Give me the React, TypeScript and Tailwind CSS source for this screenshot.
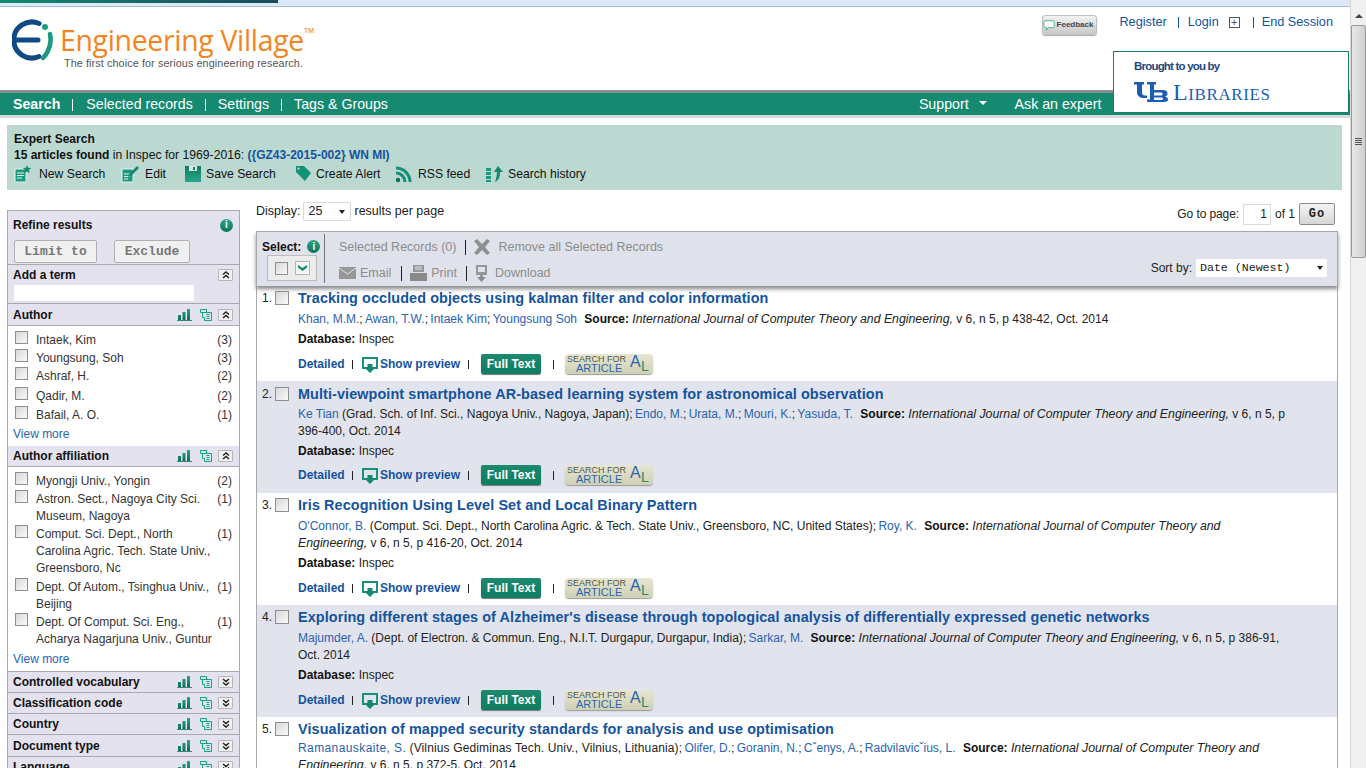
import React from "react";

const GREEN = "#138a70";

const Check = ({ className = "" }: { className?: string }) => (
  <span className={`block w-[13px] h-[13px] shrink-0 border border-[#8f8f8f] bg-gradient-to-br from-[#d8d8d8] to-[#fafafa] ${className}`} />
);

const Info = ({ className = "" }: { className?: string }) => (
  <span className={`flex items-center justify-center w-[13px] h-[13px] rounded-full bg-gradient-to-b from-[#2aa888] to-[#0c7259] text-white text-[10px] font-bold leading-none ${className}`}>
    i
  </span>
);

const Bars = () => (
  <svg width="15" height="12" viewBox="0 0 15 12">
    <defs>
      <linearGradient id="barg" x1="0" y1="0" x2="0" y2="1">
        <stop offset="0" stopColor="#25a486" />
        <stop offset="1" stopColor="#0b6f58" />
      </linearGradient>
    </defs>
    <path d="M1 6h3v5H1zM5.500 3h3v8h-3zM10 0h3v11h-3z" fill="url(#barg)" />
    <path d="M0 11.200h15V12H0z" fill="#0b6f58" />
  </svg>
);

const Tree = () => (
  <svg width="12" height="12" viewBox="0 0 12 12" fill="none" stroke="#12a585" strokeWidth="1">
    <path d="M.5.500h6v3h-6zM2.500 3.500h9v8h-7v-3h-2zM6.500 5.500h3M6.500 7.500h3M6.500 9.500h3" />
  </svg>
);

const Toggle = ({ open }: { open: boolean }) => (
  <span className="flex items-center justify-center w-[15px] h-[12px] border border-[#b5b5b5] rounded-[1px] bg-[#f1f1f1]">
    <svg width="8" height="8" viewBox="0 0 8 8" fill="none" stroke="#222" strokeWidth="1.500">
      {open ? <path d="M1 3.500 4 1l3 2.500M1 7 4 4.500 7 7" /> : <path d="M1 1l3 2.500L7 1M1 4.500 4 7l3-2.500" />}
    </svg>
  </span>
);

const FacetHead = ({ label, open, h = "h-[21px]" }: { label: string; open: boolean; h?: string }) => (
  <div className={`flex items-center ${h} pl-[5px] pr-[6px] bg-[#e5e2ef] border-b border-[#a9a9a9] font-bold text-[#111]`}>
    <span className="flex-1">{label}</span>
    <span className="mr-[8px] flex"><Bars /></span>
    <span className="mr-[6px] flex"><Tree /></span>
    <Toggle open={open} />
  </div>
);

const FacetItem = ({ label, n, h }: { label: React.ReactNode; n: number; h: string }) => (
  <div className={`flex items-start pl-[7px] pr-[7px] leading-[17px] text-[#333] ${h}`}>
    <Check className="mt-[0px]" />
    <span className="ml-[8px] flex-1 pt-[1px] whitespace-nowrap">{label}</span>
    <span className="pt-[1px]">({n})</span>
  </div>
);

const ViewMore = () => (
  <div className="pl-[5px] h-[17px] leading-[17px] text-[#2a62b0]">View more</div>
);

const Sidebar = () => (
  <div className="w-[233px] shrink-0 border border-b-0 border-[#a9a9a9] bg-white h-[600px] overflow-hidden text-[12px]">
    <div className="bg-[#e5e2ef] border-b border-[#a9a9a9] h-[54px] px-[5px]">
      <div className="flex items-center justify-between h-[26px] pt-[2px] pr-[1px]">
        <span className="font-bold text-[#111]">Refine results</span>
        <Info />
      </div>
      <div className="flex gap-[17px] pl-[1px] mt-[3px]">
        <span className="flex items-center justify-center w-[83px] h-[23px] rounded-[2px] border border-[#b0b0b0] bg-[#f0f0f0] text-[#777] font-bold text-[13px] pt-[1px] font-['Liberation_Mono',monospace]">Limit to</span>
        <span className="flex items-center justify-center w-[76px] h-[23px] rounded-[2px] border border-[#b0b0b0] bg-[#f0f0f0] text-[#777] font-bold text-[13px] pt-[1px] font-['Liberation_Mono',monospace]">Exclude</span>
      </div>
    </div>
    <div className="bg-[#e5e2ef] border-b border-[#a9a9a9] h-[39px] pl-[5px] pr-[6px]">
      <div className="flex items-center justify-between h-[20px] font-bold text-[#111]">
        <span>Add a term</span>
        <Toggle open />
      </div>
      <div className="w-[180px] h-[16px] bg-white rounded-[1px] ml-[1px]" />
    </div>
    <FacetHead label="Author" open h="h-[22px]" />
    <div className="pt-[5px] h-[120px]">
      <FacetItem label="Intaek, Kim" n={3} h="h-[18px]" />
      <FacetItem label="Youngsung, Soh" n={3} h="h-[18px]" />
      <FacetItem label="Ashraf, H." n={2} h="h-[20px]" />
      <FacetItem label="Qadir, M." n={2} h="h-[19px]" />
      <FacetItem label="Bafail, A. O." n={1} h="h-[20px]" />
      <ViewMore />
    </div>
    <FacetHead label="Author affiliation" open />
    <div className="pt-[5px] h-[204px] border-t-0">
      <FacetItem label="Myongji Univ., Yongin" n={2} h="h-[18px]" />
      <FacetItem label={<>Astron. Sect., Nagoya City Sci.<br />Museum, Nagoya</>} n={1} h="h-[35px]" />
      <FacetItem label={<>Comput. Sci. Dept., North<br />Carolina Agric. Tech. State Univ.,<br />Greensboro, Nc</>} n={1} h="h-[53px]" />
      <FacetItem label={<>Dept. Of Autom., Tsinghua Univ.,<br />Beijing</>} n={1} h="h-[35px]" />
      <FacetItem label={<>Dept. Of Comput. Sci. Eng.,<br />Acharya Nagarjuna Univ., Guntur</>} n={1} h="h-[38px]" />
      <ViewMore />
    </div>
    <div className="border-t border-[#a9a9a9]">
      <FacetHead label="Controlled vocabulary" open={false} />
      <FacetHead label="Classification code" open={false} />
      <FacetHead label="Country" open={false} />
      <FacetHead label="Document type" open={false} h="h-[22px]" />
      <FacetHead label="Language" open={false} />
    </div>
  </div>
);

const Sep = ({ className = "" }: { className?: string }) => (
  <span className={`inline-block w-px h-[11px] shrink-0 bg-[#222] ${className}`} />
);

const SearchForArticle = () => (
  <span className="relative block w-[88px] h-[20px] rounded-[4px] bg-gradient-to-b from-[#e6e6d3] to-[#cfd0b4] shadow-[0_1px_1px_#999] overflow-hidden font-normal">
    <span className="absolute left-[2px] top-[1px] text-[9px] leading-[9px] text-[#4f5a4f] whitespace-nowrap">SEARCH FOR</span>
    <span className="absolute left-[11px] top-[9px] text-[11px] leading-[11px] text-[#2c64ad] whitespace-nowrap">ARTICLE</span>
    <span className="absolute left-[65px] top-[0px] text-[16px] leading-[16px] text-[#2c64ad]">A</span>
    <span className="absolute left-[76px] top-[5px] text-[14px] leading-[15px] text-[#2f8a57]">L</span>
  </span>
);

const Actions = () => (
  <div className="flex items-center h-[26px] text-[#14539f] font-bold whitespace-nowrap">
    <span className="w-[46px]">Detailed</span>
    <Sep className="ml-[8px] mr-[9px] !h-[9px]" />
    <svg width="16" height="16" viewBox="0 0 16 16" className="mr-[2px] mt-[2px] shrink-0">
      <path d="M4 11H1V1h14v10h-3" fill="none" stroke="#18917a" strokeWidth="2" />
      <path d="M5.500 7h5v3H14l-6 6-6-6h3.500z" fill="#138a70" />
    </svg>
    <span className="w-[80px]">Show preview</span>
    <Sep className="ml-[8px] mr-[12px] !h-[9px]" />
    <span className="flex items-center justify-center w-[60px] h-[20px] rounded-[2px] bg-gradient-to-b from-[#1c8a6f] to-[#0f7b61] text-white shadow-[0_1px_1px_#777] mb-[1px]">Full Text</span>
    <Sep className="ml-[12px] mr-[11px] !h-[9px]" />
    <SearchForArticle />
  </div>
);

type Result = {
  title: string;
  authors: React.ReactNode;
  grey?: boolean;
};

const A = ({ children }: { children: React.ReactNode }) => <span className="text-[#2a62b0]">{children}</span>;
const Semi = () => <span className="-mr-[1px]">; </span>;
const Src = ({ children }: { children?: React.ReactNode }) => (
  <span>
    <b className="ml-[4px] text-[#111]">Source: </b>
    <i className="text-[12.300px]">International Journal of Computer Theory and Engineering,</i>
    {children}
  </span>
);

const results: Result[] = [
  {
    title: "Tracking occluded objects using kalman filter and color information",
    authors: (
      <>
        <A>Khan, M.M.</A><Semi /><A>Awan, T.W.</A><Semi /><A>Intaek Kim</A><Semi /><A>Youngsung Soh</A> <Src> v 6, n 5, p 438-42, Oct. 2014</Src>
      </>
    ),
  },
  {
    title: "Multi-viewpoint smartphone AR-based learning system for astronomical observation",
    grey: true,
    authors: (
      <>
        <A>Ke Tian</A> (Grad. Sch. of Inf. Sci., Nagoya Univ., Nagoya, Japan)<Semi /><A>Endo, M.</A><Semi /><A>Urata, M.</A><Semi /><A>Mouri, K.</A><Semi /><A>Yasuda, T.</A> <Src> v 6, n 5, p 396-400, Oct. 2014</Src>
      </>
    ),
  },
  {
    title: "Iris Recognition Using Level Set and Local Binary Pattern",
    authors: (
      <>
        <A>O'Connor, B.</A> (Comput. Sci. Dept., North Carolina Agric. &amp; Tech. State Univ., Greensboro, NC, United States)<Semi /><A>Roy, K.</A> <Src> v 6, n 5, p 416-20, Oct. 2014</Src>
      </>
    ),
  },
  {
    title: "Exploring different stages of Alzheimer's disease through topological analysis of differentially expressed genetic networks",
    grey: true,
    authors: (
      <>
        <A>Majumder, A.</A> (Dept. of Electron. &amp; Commun. Eng., N.I.T. Durgapur, Durgapur, India)<Semi /><A>Sarkar, M.</A> <Src> v 6, n 5, p 386-91, Oct. 2014</Src>
      </>
    ),
  },
  {
    title: "Visualization of mapped security standards for analysis and use optimisation",
    authors: (
      <>
        <span className="tracking-[0.4px]"><A>Ramanauskaite, S.</A></span> <span className="tracking-[0.13px]">(Vilnius Gediminas Tech. Univ., Vilnius, Lithuania)</span><Semi /><A>Olifer, D.</A><Semi /><A>Goranin, N.</A><Semi /><A>Cˇenys, A.</A><Semi /><A>Radvilavicˇius, L.</A> <Src> v 6, n 5, p 372-5, Oct. 2014</Src>
      </>
    ),
  },
];

const ResultRow = ({ r, i }: { r: Result; i: number }) => (
  <div className={`flex pl-[5px] pr-[50px] ${i === 1 ? "pt-[4px] pb-[5px]" : "pt-[3px] pb-[4px]"} ${r.grey ? "bg-[#e1e4ec]" : "bg-white"}`}>
    <span className="w-[13px] text-[#222] leading-[18px]">{i + 1}.</span>
    <Check className="mt-[2px] !w-[14px] !h-[14px]" />
    <div className="ml-[9px] flex-1">
      <div className="h-[18px] leading-[18px] text-[14.400px] font-bold text-[#14539f] whitespace-nowrap tracking-[0.1px]">{r.title}</div>
      <div className={`leading-[17px] text-[#222] ${i === 1 ? "mt-[3px]" : i === 4 ? "mt-[2px]" : "mt-[4px]"}`}>{r.authors}</div>
      <div className="mt-[3px] leading-[17px] text-[#222]"><b className="text-[#111]">Database:</b> Inspec</div>
      <div className={i === 1 ? "mt-[2px]" : "mt-[3px]"}><Actions /></div>
    </div>
  </div>
);

const tb = "flex items-center text-[12.200px] text-[#111]";

const App = () => (
  <div className="relative h-[768px] overflow-hidden flex bg-white text-[12px] font-['Liberation_Sans',Arial,sans-serif]">
    <div className="w-[1350px] shrink-0">
      {/* browser strip */}
      <div className="h-[7px] bg-[#dce9f8] border-b border-[#a9bcd6]">
        <div className="w-[278px] h-[3px] bg-gradient-to-r from-[#128a6f] to-[#174b5a]" />
      </div>

      {/* header */}
      <div className="relative flex justify-between h-[83px]">
        <div className="flex pl-[12px] pt-[12px]">
          <svg width="48" height="46" viewBox="0 0 48 46" className="shrink-0">
            <path d="M27 4.500A18 18 0 1 0 27 37.500" fill="none" stroke="#0f4a85" strokeWidth="5" strokeLinecap="round" />
            <path d="M5 21h21" stroke="#0f4a85" strokeWidth="5" strokeLinecap="round" />
            <circle cx="33" cy="8" r="3" fill="#1c9a80" />
            <path d="M38 15c2 8-1 18-7 24" fill="none" stroke="#1c9a80" strokeWidth="4.500" strokeLinecap="round" />
          </svg>
          <div>
            <div className="flex items-start h-[38px] pt-[2px]">
              <span className="text-[28.400px] leading-[38px] tracking-[-0.3px] text-[#f5841f] font-['Open_Sans',sans-serif]">Engineering Village</span>
              <span className="text-[7px] text-[#f5a35a] font-bold mt-[5px]">TM</span>
            </div>
            <div className="pl-[4px] -mt-[1px] text-[10.800px] leading-[14px] text-[#555] tracking-[0.1px]">The first choice for serious engineering research.</div>
          </div>
        </div>
        <div className="flex items-start pr-[17px] pt-[7px] text-[#14539f] text-[12.700px]">
          <span className="flex items-center justify-end w-[55px] h-[20px] mt-[1px] rounded-[3px] border border-[#c0c0c0] bg-gradient-to-b from-[#f2f2f2] to-[#c9c9c9] mr-[22px] shadow-[0_1px_1px_#aaa] text-[8px] font-bold text-[#444] pr-[3px] gap-[1px]">
            <svg width="14" height="13" viewBox="0 0 14 13" fill="#fff" stroke="#3fa58d">
              <path d="M2 1h10a1 1 0 0 1 1 1v6a1 1 0 0 1-1 1H6l-2 3V9H2a1 1 0 0 1-1-1V2a1 1 0 0 1 1-1z" />
            </svg>
            Feedback
          </span>
          <span className="leading-[16px]">Register</span>
          <span className="w-px h-[11px] bg-[#14539f] ml-[11px] mr-[9px] mt-[3px]" />
          <span className="leading-[16px]">Login</span>
          <span className="flex items-center justify-center w-[11px] h-[11px] border border-[#555] text-[#555] ml-[10px] mr-[13px] mt-[3px] text-[11px] leading-none">+</span>
          <span className="w-px h-[11px] bg-[#14539f] mr-[8px] mt-[3px]" />
          <span className="leading-[16px]">End Session</span>
        </div>
      </div>

      {/* nav */}
      <div className="h-[3px] bg-[#8e8e8e]" />
      <div className="flex items-center h-[22px] pl-[13px] pt-[2px] bg-[#158a70] text-white text-[14.200px]">
        <b>Search</b>
        <span className="w-px h-[12px] bg-white ml-[12px] mr-[13px]" />
        <span>Selected records</span>
        <span className="w-px h-[12px] bg-white ml-[12px] mr-[12px]" />
        <span>Settings</span>
        <span className="w-px h-[12px] bg-white ml-[12px] mr-[12px]" />
        <span>Tags &amp; Groups</span>
        <span className="ml-[531px]">Support</span>
        <span className="ml-[10px] mb-[4px] w-0 h-0 border-x-[4px] border-x-transparent border-t-[4px] border-t-white" />
        <span className="ml-[28px]">Ask an expert</span>
      </div>
      <div className="h-[3px] bg-[#d9d9d9]" />

      {/* brought to you */}
      <div className="absolute left-[1113px] top-[51px] w-[236px] h-[62px] border border-[#15806a] bg-white pl-[20px] pt-[7px]">
        <div className="text-[11.500px] leading-[14px] font-bold tracking-[-0.8px] text-[#1d4a80]">Brought to you by</div>
        <div className="flex items-center mt-[7px] h-[24px]">
          <svg width="34" height="20" viewBox="0 0 34 20" fill="#1a5fb4" className="shrink-0" fillRule="evenodd">
            <path d="M0 0h10v2.500H8v8c0 2 1 3 3 3h2V16h-3c-4 0-7-2-7-5.500v-8H0z" />
            <path d="M13 0h9v2.500h-2V8h8c4 0 5.500 1.500 5.500 3.500 0 1.500-1 2.500-2.500 3 2 .5 3 1.500 3 3 0 1.500-1 2.500-4 2.500H13v-2.500h3v-15h-3zM20 10.500v3h7c1 0 1.500-.5 1.500-1.500s-.5-1.500-1.500-1.500zM20 15.500V18h7c1.500 0 2-.5 2-1.250s-.5-1.250-2-1.250z" />
          </svg>
          <span className="ml-[5px] text-[24px] leading-[24px] text-[#1a5fb4] font-['Liberation_Serif',serif] [font-variant:small-caps] tracking-[0.6px]">Libraries</span>
        </div>
      </div>

      {/* search summary */}
      <div className="mt-[7px] ml-[7px] w-[1335px] h-[65px] bg-[#bbd9d0] pl-[7px] pt-[6px] text-[#111]">
        <div className="font-bold leading-[16px]">Expert Search</div>
        <div className="leading-[17px]">
          <b>15 articles found</b> <span className="text-[12.200px]">in Inspec for 1969-2016:</span> <b className="text-[#14539f]">({"{"}GZ43-2015-002{"}"} WN MI)</b>
        </div>
        <div className="flex items-center h-[20px]">
          <span className={`${tb} w-[107px]`}>
            <svg width="18" height="18" viewBox="0 0 18 18" className="mr-[7px]">
              <path d="M1 4h11v13H1z" fill="#1b9a7e" stroke="#e4f2ee" />
              <path d="M3 8h7M3 10.500h7M3 13h5" stroke="#e4f2ee" />
              <path d="M13 0l1.200 2.800 3 .2-2.300 2 .8 3-2.700-1.600L10.300 8l.8-3-2.300-2 3-.2z" fill="#128a70" />
            </svg>
            New Search
          </span>
          <span className={`${tb} w-[64px]`}>
            <svg width="18" height="18" viewBox="0 0 18 18" className="mr-[6px]">
              <path d="M1 4h11v13H1z" fill="#1b9a7e" stroke="#e4f2ee" />
              <path d="M3 9h6M3 11.500h6M3 14h4" stroke="#e4f2ee" />
              <path d="M16 1l2 2-8 8-3 1 1-3z" fill="#128a70" />
            </svg>
            Edit
          </span>
          <span className={`${tb} w-[110px]`}>
            <svg width="16" height="16" viewBox="0 0 16 16" className="mr-[5px]">
              <defs>
                <linearGradient id="saveg" x1="0" y1="0" x2="0" y2="1">
                  <stop offset="0" stopColor="#0e7a62" />
                  <stop offset="1" stopColor="#2aa78a" />
                </linearGradient>
              </defs>
              <path d="M0 0h16v16H0z" fill="url(#saveg)" />
              <path d="M4 0h8v5H4z" fill="#d5ebe4" />
              <path d="M8 1h2v3H8z" fill="#11836a" />
            </svg>
            Save Search
          </span>
          <span className={`${tb} w-[100px]`}>
            <svg width="17" height="17" viewBox="0 0 17 17" className="mr-[4px]">
              <path d="M1 1h8l7 7-6 8-9-9z" fill="#149077" />
              <circle cx="3.500" cy="3.500" r="1" fill="#d5ebe4" />
            </svg>
            Create Alert
          </span>
          <span className={`${tb} w-[90px]`}>
            <svg width="18" height="18" viewBox="0 0 18 18" fill="none" stroke="#149077" strokeWidth="3" className="mr-[5px]">
              <circle cx="3" cy="15" r="2.200" fill="#0e6f59" stroke="none" />
              <path d="M1 8a9 9 0 0 1 9 9M1 3a14 14 0 0 1 14 14" />
            </svg>
            RSS feed
          </span>
          <span className={tb}>
            <svg width="18" height="18" viewBox="0 0 18 18" className="mr-[5px]">
              <path d="M1 3h5v3H1zM1 7h5v3H1zM1 11h5v3H1zM1 15h5v2H1z" fill="#1b9a7e" />
              <path d="M13 1l5 6h-3c0 5-1 8-5 10 1-3 2-6 2-10H9z" fill="#128a70" />
            </svg>
            Search history
          </span>
        </div>
      </div>

      {/* body */}
      <div className="flex mt-[20px] ml-[7px] items-start">
        <Sidebar />
        <div className="ml-[16px] -mt-[8px] w-[1082px] text-[#222]">
          <div className="flex items-start justify-between h-[29px]">
            <div className="flex items-center text-[12.500px]">
              <span>Display:</span>
              <span className="flex items-center justify-between mx-[3px] w-[48px] h-[19px] pl-[4px] pr-[5px] border border-[#dcdcdc] rounded-[1px] bg-white">
                25
                <span className="w-0 h-0 border-x-[3.500px] border-x-transparent border-t-[4px] border-t-[#222]" />
              </span>
              <span>results per page</span>
            </div>
            <div className="flex items-center mr-[3px] mt-[1px]">
              <span className="tracking-[-0.1px]">Go to page:</span>
              <span className="flex items-center justify-end w-[28px] h-[21px] mx-[4px] pr-[3px] border border-[#dcdcdc] bg-white">1</span>
              <span>of 1</span>
              <span className="flex items-center justify-center ml-[4px] w-[36px] h-[22px] rounded-[2px] border border-[#8a8a8a] bg-gradient-to-b from-[#f4f4f4] to-[#d6d6d6] font-bold text-[#222] text-[12px] tracking-[1px] font-['Liberation_Mono',monospace]">Go</span>
            </div>
          </div>

          <div className="relative z-10 border border-[#a9a9a9] border-b-0 h-[55px] bg-[#dfe2ea] shadow-[0_3px_4px_#888] flex">
            <div className="w-[68px] h-[49px] mt-[2px] border-r border-[#777] pl-[5px] shrink-0">
              <div className="flex items-center h-[21px] pt-[4px] font-bold text-[#111]">
                Select:<Info className="ml-[6px]" />
              </div>
              <div className="ml-[5px] flex items-center gap-[7px] w-[50px] h-[26px] pl-[7px] border border-[#bcbcbc] bg-[#ececec]">
                <Check />
                <span className="flex items-center justify-center w-[15px] h-[14px] border border-[#b5b5b5] bg-[#f6f6f6]">
                  <svg width="9" height="6" viewBox="0 0 9 6"><path d="M0 0l4.500 3L9 0v2.500L4.500 6 0 2.500z" fill={GREEN} /></svg>
                </span>
              </div>
            </div>
            <div className="pl-[14px] text-[#8c8c8c] flex-1 text-[12.500px]">
              <div className="flex items-center h-[22px] mt-[4px]">
                <span>Selected Records (0)</span>
                <Sep className="ml-[9px] mr-[7px] !h-[15px]" />
                <svg width="18" height="16" viewBox="0 0 18 16" className="mr-[7px]">
                  <path d="M1 2l3-2 5 5 5-5 3 2-5 6 5 6-3 2-5-5-5 5-3-2 5-6z" fill="#8f8f8f" />
                </svg>
                <span>Remove all Selected Records</span>
              </div>
              <div className="flex items-center h-[26px] mt-[2px]">
                <svg width="17" height="12" viewBox="0 0 17 12" className="mr-[4px]">
                  <path d="M0 0h17v12H0z" fill="#979797" />
                  <path d="M0 1l8.500 6L17 1" fill="none" stroke="#dfe2ea" />
                </svg>
                <span>Email</span>
                <Sep className="ml-[10px] mr-[8px] !h-[15px]" />
                <svg width="17" height="16" viewBox="0 0 17 16" className="mr-[4px]">
                  <path d="M3 0h11v7H3z" fill="#979797" />
                  <path d="M5 2h7M5 4h7" stroke="#dfe2ea" />
                  <path d="M0 8h17v8H0z" fill="#8a8a8a" />
                </svg>
                <span>Print</span>
                <Sep className="ml-[9px] mr-[8px] !h-[15px]" />
                <svg width="13" height="17" viewBox="0 0 13 17" className="mr-[7px]">
                  <path d="M1 0h11v10H8v3H5v-3H1z" fill="#979797" />
                  <path d="M3 2h7v5H3z" fill="#dfe2ea" />
                  <path d="M2 12h9l-4.500 5z" fill="#8a8a8a" />
                </svg>
                <span>Download</span>
              </div>
            </div>
            <div className="flex items-center absolute right-[10px] top-[27px]">
              <span>Sort by:</span>
              <span className="flex items-center justify-between ml-[4px] w-[131px] h-[18px] px-[4px] bg-white text-[#222] text-[11.600px] font-['Liberation_Mono',monospace]">
                Date (Newest)
                <span className="w-0 h-0 border-x-[3.500px] border-x-transparent border-t-[4px] border-t-[#222]" />
              </span>
            </div>
          </div>

          <div className="border-x border-[#a9a9a9]">
            {results.map((r, i) => (
              <ResultRow key={i} r={r} i={i} />
            ))}
          </div>
        </div>
      </div>
    </div>

    {/* scrollbar */}
    <div className="w-[16px] h-full bg-[#f0f0f0] border-l border-[#d8d8d8] flex flex-col items-center">
      <div className="h-[25px] flex items-center justify-center pt-[7px]">
        <span className="w-0 h-0 border-x-[4px] border-x-transparent border-b-[4px] border-b-[#444]" />
      </div>
      <div className="w-[15px] h-[233px] rounded-[2px] border border-[#9a9a9a] bg-gradient-to-r from-[#e8e8e8] to-[#d0d0d0] flex flex-col items-center justify-center gap-[1px]">
        <span className="w-[7px] h-px bg-[#555]" />
        <span className="w-[7px] h-px bg-[#555]" />
        <span className="w-[7px] h-px bg-[#555]" />
        <span className="w-[7px] h-px bg-[#555]" />
      </div>
    </div>
  </div>
);

export default App;
